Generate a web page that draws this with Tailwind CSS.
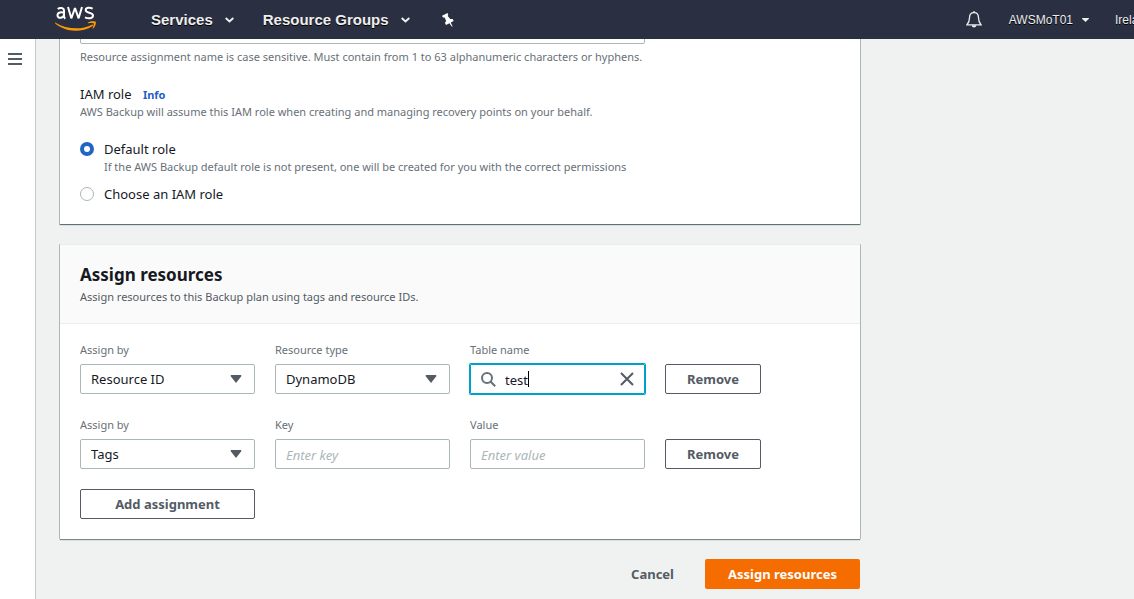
<!DOCTYPE html>
<html lang="en">
<head>
<meta charset="utf-8">
<meta name="viewport" content="width=device-width, initial-scale=1">
<title>Assign resources</title>
<script src="https://cdn.jsdelivr.net/npm/@tailwindcss/browser@4"></script>
</head>
<body class="flex min-h-screen flex-col overflow-hidden bg-[#f0f2f1] font-['Noto_Sans',sans-serif] text-[13px] leading-5 text-[#16191f]">
<header class="relative z-10 flex h-[39px] shrink-0 items-center overflow-hidden bg-[#2a2f41] pl-[55px] font-['Liberation_Sans',Arial,sans-serif] whitespace-nowrap text-[#eeeeee]">
  <a href="#" aria-label="AWS" class="w-[42px]">
    <svg class="block" width="42" height="27" viewBox="0 0 42 27" fill="none">
      <g stroke="#fff" stroke-width="2">
        <path d="M2.800 3C4.500 1.400 9 1.200 9 4.800V10C9 11.200 9.500 12 10.200 12.700M9 6.700C6.500 6 2.500 6.200 2.500 9.300C2.500 13.200 9 12.300 9 8.300"/>
        <path d="M13 1L16.300 12.300L20 2L23.600 12.300L27 1" stroke-linejoin="bevel"/>
        <path d="M37.700 2.600C34.500 1.200 30.700 1.500 30.700 4.100C30.700 5.900 32.200 6.300 34.200 6.800C36.500 7.400 38 8 38 9.500C38 12.800 33 12.800 30 11.300"/>
      </g>
      <path d="M.6 16.700C11 23 26 24.500 37 18.700C38.200 18.100 38.700 19.200 37.700 19.900C26 27.200 10 26.200.3 17.600C-.2 17 .1 16.400.6 16.700Z" fill="#ff9900"/>
      <path d="M33 16.600C35.500 15 40 15.100 40.700 15.800C41.300 16.800 40.300 21 38.100 22.600C37.600 22.900 37.300 22.700 37.600 22.100C38.300 20.500 39.100 18.100 38.700 17.500C38.200 16.900 35.200 17.100 33.400 17.300C32.800 17.300 32.600 16.900 33 16.600Z" fill="#ff9900"/>
    </svg>
  </a>
  <nav class="ml-[54px] flex items-center text-[15px] font-bold [text-shadow:0_1px_0_#000]">
    <a href="#" class="flex items-center gap-3">Services
      <svg width="9" height="6" viewBox="0 0 9 6" fill="none" stroke="#eee" stroke-width="2"><path d="M.7 1L4.500 4.500L8.300 1"/></svg></a>
    <a href="#" class="ml-[29px] flex items-center gap-3">Resource Groups
      <svg width="9" height="6" viewBox="0 0 9 6" fill="none" stroke="#eee" stroke-width="2"><path d="M.7 1L4.500 4.500L8.300 1"/></svg></a>
    <a href="#" aria-label="Pin" class="ml-8">
      <svg width="12" height="14" viewBox="0 0 12 14" fill="#fff"><path d="M0 2.800L5.500 0L6.300 1.700L5.700 2.900L8.300 6L10.600 5.900L11.700 8.100L8.700 9.600L10.700 13.500L9.800 13.600L7.400 10.200L4 12L2.900 9.800L4.200 7.900L2.600 4.400L1 4.400Z"/></svg></a>
  </nav>
  <nav class="ml-auto flex items-center text-xs [text-shadow:0_1px_0_#000]">
    <a href="#" aria-label="Notifications">
      <svg width="16" height="17" viewBox="0 0 16 17" fill="none" stroke="#eee" stroke-width="1.300"><path d="M8 1.700C4.900 1.700 3.500 4.100 3.500 6.800C3.500 10.500 2.700 11.900 1 13.800H15C13.300 11.900 12.500 10.500 12.500 6.800C12.500 4.100 11.100 1.700 8 1.700Z"/><path d="M8 0V2"/><path d="M5.700 14.300H10.300C10.200 17.300 5.800 17.300 5.700 14.300Z" fill="#eee" stroke="none"/></svg></a>
    <a href="#" class="ml-[27px] flex items-center gap-[9px]">AWSMoT01
      <svg width="7" height="4" viewBox="0 0 7 4" fill="#eee"><path d="M.3 0H6.700L7 .7L3.500 4L0 .7Z"/></svg></a>
    <a href="#" class="ml-[26px] w-[19px] overflow-hidden">Ireland</a>
  </nav>
</header>
<div class="flex grow">
  <aside class="w-9 shrink-0 border-r border-[#c3cccc] bg-white pt-[14px] pl-2">
    <button aria-label="Open navigation" class="block"><svg width="14" height="12" viewBox="0 0 14 12" fill="#545b64"><path d="M0 0H14V2H0ZM0 5H14V7H0ZM0 10H14V12H0Z"/></svg></button>
  </aside>
  <main class="min-w-0 grow pl-6">
    <form class="max-w-[800px]">
      <section class="bg-white px-5 pb-5 shadow-[0_1px_1px_0_rgba(0,28,36,0.5),0_0_0_1px_rgba(0,28,36,0.2)]">
        <input id="assignment-name" aria-label="Resource assignment name" class="-mt-[25px] block h-[30px] w-[565px] rounded-[2px] border border-[#aab7b8] px-[10px]">
        <p class="mt-1 text-[11px] leading-[18px] text-[#687078]">Resource assignment name is case sensitive. Must contain from 1 to 63 alphanumeric characters or hyphens.</p>
        <div class="mt-[18px]">IAM role <a href="#" class="ml-2 text-[11px] font-bold text-[#1f5fc4]">Info</a></div>
        <p class="-mt-px text-[11px] leading-4 text-[#687078]">AWS Backup will assume this IAM role when creating and managing recovery points on your behalf.</p>
        <div class="mt-[19px] flex gap-[10px]">
          <input id="role-default" type="radio" name="role" checked class="mt-[3px] size-[14px] appearance-none rounded-full border border-[#aab7b8] bg-white checked:border-4 checked:border-[#2065c4]">
          <label for="role-default">Default role<span class="block text-[11px] leading-4 text-[#687078]">If the AWS Backup default role is not present, one will be created for you with the correct permissions</span></label>
        </div>
        <div class="mt-[9px] flex gap-[10px]">
          <input id="role-iam" type="radio" name="role" class="mt-[3px] size-[14px] appearance-none rounded-full border border-[#aab7b8] bg-white checked:border-4 checked:border-[#2065c4]">
          <label for="role-iam">Choose an IAM role</label>
        </div>
      </section>
      <section class="mt-5 bg-white shadow-[0_1px_1px_0_rgba(0,28,36,0.5),1px_0_0_0_rgba(0,28,36,0.2),-1px_0_0_0_rgba(0,28,36,0.2)]">
        <div class="border-y border-[#eaeded] bg-[#fafafa] px-5 pt-[18px] pb-[17px]">
          <h2 class="text-[17px] leading-6 font-bold">Assign resources</h2>
          <p class="mt-px text-[11px] leading-[18px] text-[#545b64]">Assign resources to this Backup plan using tags and resource IDs.</p>
        </div>
        <div class="px-5 pt-[17px] pb-5">
          <div class="grid grid-cols-[175px_175px_175px_96px] items-end gap-5">
            <div>
              <label for="by1" class="mb-[5px] block text-[11px] leading-[18px] text-[#687078]">Assign by</label>
              <div class="relative"><select id="by1" class="block h-[30px] w-full appearance-none rounded-[2px] border border-[#aab7b8] bg-white px-[10px]"><option>Resource ID</option></select>
              <svg class="pointer-events-none absolute top-[11px] right-[13px]" width="12" height="8" viewBox="0 0 12 8" fill="#545b64"><path d="M1 0H11L11.500 1L6 8L.5 1Z"/></svg></div>
            </div>
            <div>
              <label for="type" class="mb-[5px] block text-[11px] leading-[18px] text-[#687078]">Resource type</label>
              <div class="relative"><select id="type" class="block h-[30px] w-full appearance-none rounded-[2px] border border-[#aab7b8] bg-white px-[10px]"><option>DynamoDB</option></select>
              <svg class="pointer-events-none absolute top-[11px] right-[13px]" width="12" height="8" viewBox="0 0 12 8" fill="#545b64"><path d="M1 0H11L11.500 1L6 8L.5 1Z"/></svg></div>
            </div>
            <div>
              <label for="table" class="mb-[5px] block text-[11px] leading-[18px] text-[#687078]">Table name</label>
              <div class="flex h-[30px] items-center rounded-[1px] border border-[#00a1c9] px-[10px] ring-1 ring-[#00a1c9]">
                <svg class="shrink-0" width="15" height="15" viewBox="0 0 15 15" fill="none" stroke="#687078" stroke-width="2"><circle cx="6" cy="6" r="5"/><path d="M9.500 9.500L14.200 14.200"/></svg>
                <input id="table" value="test" class="ml-[9px] [field-sizing:content] pt-0.5 outline-none">
                <span class="h-4 w-px bg-black"></span>
                <button type="button" aria-label="Clear" class="ml-auto"><svg width="14" height="14" viewBox="0 0 14 14" fill="none" stroke="#545b64" stroke-width="2"><path d="M1 1L13 13M13 1L1 13"/></svg></button>
              </div>
            </div>
            <button type="button" class="h-[30px] rounded-[2px] border border-[#545b64] font-bold text-[#545b64]">Remove</button>
            <div>
              <label for="by2" class="mb-[5px] block pt-[2px] text-[11px] leading-[18px] text-[#687078]">Assign by</label>
              <div class="relative"><select id="by2" class="block h-[30px] w-full appearance-none rounded-[2px] border border-[#aab7b8] bg-white px-[10px]"><option>Tags</option></select>
              <svg class="pointer-events-none absolute top-[11px] right-[13px]" width="12" height="8" viewBox="0 0 12 8" fill="#545b64"><path d="M1 0H11L11.500 1L6 8L.5 1Z"/></svg></div>
            </div>
            <div>
              <label for="key" class="mb-[5px] block text-[11px] leading-[18px] text-[#687078]">Key</label>
              <input id="key" placeholder="Enter key" class="block h-[30px] w-full rounded-[2px] border border-[#aab7b8] px-[10px] pt-0.5 placeholder:text-[#aab7b8] placeholder:italic">
            </div>
            <div>
              <label for="value" class="mb-[5px] block text-[11px] leading-[18px] text-[#687078]">Value</label>
              <input id="value" placeholder="Enter value" class="block h-[30px] w-full rounded-[2px] border border-[#aab7b8] px-[10px] pt-0.5 placeholder:text-[#aab7b8] placeholder:italic">
            </div>
            <button type="button" class="h-[30px] rounded-[2px] border border-[#545b64] font-bold text-[#545b64]">Remove</button>
            <button type="button" class="h-[30px] rounded-[2px] border border-[#545b64] font-bold text-[#545b64]">Add assignment</button>
          </div>
        </div>
      </section>
      <div class="mt-5 flex justify-end gap-[10px] pb-[10px]">
        <button type="button" class="h-[30px] px-[21px] font-bold text-[#545b64]">Cancel</button>
        <button type="submit" class="h-[30px] w-[155px] rounded-[2px] bg-[#f56c00] font-bold text-white">Assign resources</button>
      </div>
    </form>
  </main>
</div>
</body>
</html>
